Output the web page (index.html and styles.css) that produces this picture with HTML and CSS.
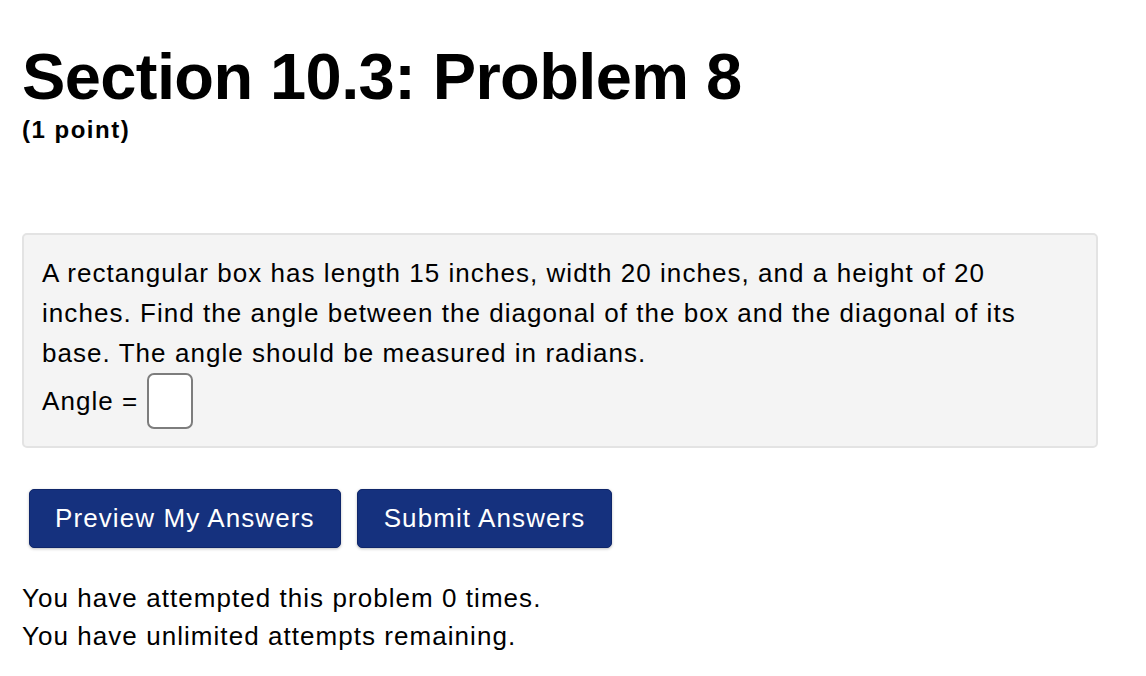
FILE: index.html
```html
<!DOCTYPE html>
<html>
<head>
<meta charset="utf-8">
<link rel="stylesheet" href="styles.css">
</head>
<body>
<div class="page">
  <h1 class="title">Section 10.3: Problem 8</h1>
  <div class="points">(1 point)</div>
  <div class="problem">
    <p class="text">A rectangular box has length 15 inches, width 20 inches, and a height of 20 inches. Find the angle between the diagonal of the box and the diagonal of its base. The angle should be measured in radians.</p>
    <div class="answer-row">Angle = <span class="answer"></span></div>
  </div>
  <div class="buttons">
    <button class="btn btn-preview">Preview My Answers</button>
    <button class="btn btn-submit">Submit Answers</button>
  </div>
  <div class="attempts">
    <div>You have attempted this problem 0 times.</div>
    <div>You have unlimited attempts remaining.</div>
  </div>
</div>
</body>
</html>
```
FILE: styles.css
```css
html, body {
  margin: 0;
  padding: 0;
  background: #fff;
}
body {
  font-family: "Liberation Sans", Arial, sans-serif;
  color: #000;
}
.page {
  padding: 37px 48px 0 22px;
}
.title {
  margin: 0;
  font-size: 65px;
  font-weight: bold;
  line-height: 80px;
  letter-spacing: -0.6px;
}
.points {
  font-size: 24px;
  font-weight: bold;
  line-height: 26px;
  letter-spacing: 1.5px;
}
.problem {
  margin-top: 90px;
  background: #f4f4f4;
  border: 2px solid #e3e3e3;
  border-radius: 5px;
  padding: 18px 18px 17px 18px;
  font-size: 26px;
  line-height: 40px;
  letter-spacing: 1.05px;
}
.text {
  margin: 0;
}
.answer-row {
  display: flex;
  align-items: center;
  gap: 9px;
  height: 56px;
}
.answer {
  display: inline-block;
  box-sizing: border-box;
  width: 46px;
  height: 56px;
  background: #fff;
  border: 2px solid #7d7d7d;
  border-radius: 7px;
}
.buttons {
  display: flex;
  gap: 16px;
  margin-top: 41px;
  padding-left: 7px;
}
.btn {
  font-family: "Liberation Sans", Arial, sans-serif;
  font-size: 26px;
  letter-spacing: 1.1px;
  color: #fff;
  background: #15317e;
  border: 1px solid #0f266a;
  border-radius: 5px;
  height: 59px;
  padding: 0 25px;
  box-shadow: 0 1px 3px rgba(0,0,0,0.25);
}
.btn-submit {
  padding: 0 26px;
}
.attempts {
  margin-top: 31px;
  font-size: 26px;
  line-height: 38px;
  letter-spacing: 1.05px;
}
```
